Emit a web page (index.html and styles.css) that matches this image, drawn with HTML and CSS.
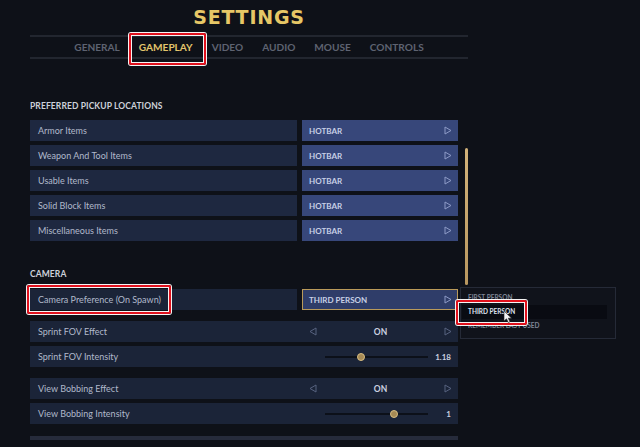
FILE: index.html
```html
<!DOCTYPE html>
<html lang="en">
<head>
  <meta charset="UTF-8">
  <title>Settings</title>
  <link rel="stylesheet" href="styles.css">
</head>
<body>
  <div class="page">
    <header class="head">
      <h1 class="title">SETTINGS</h1>
      <nav class="tabs">
        <span class="tab">GENERAL</span>
        <span class="tab active marked">GAMEPLAY</span>
        <span class="tab">VIDEO</span>
        <span class="tab">AUDIO</span>
        <span class="tab">MOUSE</span>
        <span class="tab">CONTROLS</span>
      </nav>
    </header>

    <div class="content">
      <div class="list">
        <h2 class="section-title">PREFERRED PICKUP LOCATIONS</h2>

        <div class="row">
          <div class="label">Armor Items</div>
          <div class="choice">HOTBAR <svg class="arrow" viewBox="0 0 8 9"><path d="M1 1 L7 4.5 L1 8 Z"/></svg></div>
        </div>
        <div class="row">
          <div class="label">Weapon And Tool Items</div>
          <div class="choice">HOTBAR <svg class="arrow" viewBox="0 0 8 9"><path d="M1 1 L7 4.5 L1 8 Z"/></svg></div>
        </div>
        <div class="row">
          <div class="label">Usable Items</div>
          <div class="choice">HOTBAR <svg class="arrow" viewBox="0 0 8 9"><path d="M1 1 L7 4.5 L1 8 Z"/></svg></div>
        </div>
        <div class="row">
          <div class="label">Solid Block Items</div>
          <div class="choice">HOTBAR <svg class="arrow" viewBox="0 0 8 9"><path d="M1 1 L7 4.5 L1 8 Z"/></svg></div>
        </div>
        <div class="row">
          <div class="label">Miscellaneous Items</div>
          <div class="choice">HOTBAR <svg class="arrow" viewBox="0 0 8 9"><path d="M1 1 L7 4.5 L1 8 Z"/></svg></div>
        </div>

        <h2 class="section-title camera-title">CAMERA</h2>

        <div class="row pref">
          <div class="label dark marked">Camera Preference (On Spawn)</div>
          <div class="choice selected">THIRD PERSON <svg class="arrow" viewBox="0 0 8 9"><path d="M1 1 L7 4.5 L1 8 Z"/></svg></div>

          <div class="dropdown">
            <div class="option">FIRST PERSON</div>
            <div class="option current marked">THIRD PERSON</div>
            <div class="option">REMEMBER LAST USED</div>
            <svg class="cursor" viewBox="0 0 10 14"><path d="M1 1 L1 11 L3.5 8.8 L5.3 12.6 L7 11.8 L5.3 8.2 L8.6 8.2 Z"/></svg>
          </div>
        </div>

        <div class="row wide gap-top">
          <div class="label">Sprint FOV Effect</div>
          <div class="toggle">
            <svg class="arrow dim" viewBox="0 0 8 9"><path d="M7 1 L1 4.5 L7 8 Z"/></svg>
            <span>ON</span>
            <svg class="arrow dim" viewBox="0 0 8 9"><path d="M1 1 L7 4.5 L1 8 Z"/></svg>
          </div>
        </div>
        <div class="row wide">
          <div class="label">Sprint FOV Intensity</div>
          <div class="slider">
            <div class="track"><span class="knob" style="left: 35%"></span></div>
            <span class="value">1.18</span>
          </div>
        </div>

        <div class="row wide gap-top">
          <div class="label">View Bobbing Effect</div>
          <div class="toggle">
            <svg class="arrow dim" viewBox="0 0 8 9"><path d="M7 1 L1 4.5 L7 8 Z"/></svg>
            <span>ON</span>
            <svg class="arrow dim" viewBox="0 0 8 9"><path d="M1 1 L7 4.5 L1 8 Z"/></svg>
          </div>
        </div>
        <div class="row wide">
          <div class="label">View Bobbing Intensity</div>
          <div class="slider">
            <div class="track"><span class="knob" style="left: 67%"></span></div>
            <span class="value">1</span>
          </div>
        </div>

        <div class="row-edge"></div>
      </div>

      <div class="scroll">
        <div class="thumb"></div>
      </div>
    </div>
  </div>
</body>
</html>
```

FILE: styles.css
```css
/* General */
body {
  margin: 0;
  background-color: #0e1118;
  font-family: Lato, "Noto Sans", sans-serif;
  color: #b4bccd;
  height: 447px;
  overflow: hidden;
}

.page {
  width: 438px;
  margin-left: 30px;
}

/* Header + tabs */
.title {
  margin: 0;
  padding-top: 6px;
  font-family: "DejaVu Sans", sans-serif;
  font-size: 19px;
  line-height: 22px;
  font-weight: bold;
  letter-spacing: 0.8px;
  text-align: center;
  color: #e6c766;
}

.tabs {
  margin-top: 7px;
  display: flex;
  justify-content: center;
  gap: 19px;
  border-top: 2px solid #22262f;
  border-bottom: 2px solid #22262f;
  height: 20px;
  align-items: center;
}

.tab {
  font-size: 10.1px;
  font-weight: bold;
  line-height: 20px;
  color: #5e6371;
}

.tab.active {
  color: #e3c56c;
}

/* red callout boxes */
.marked {
  position: relative;
}

.marked::after {
  content: "";
  position: absolute;
  border: 2px solid #e0101c;
  border-radius: 2px;
  box-shadow: 0 0 0 1px #f4f4f4, inset 0 0 0 1px #f4f4f4;
  pointer-events: none;
}

.tab.marked::after {
  left: -10px;
  right: -13px;
  top: -4px;
  bottom: -8px;
}

.label.marked::after {
  left: -3px;
  top: -4px;
  width: 140px;
  height: 25px;
}

.option.marked::after {
  left: -6px;
  top: -5px;
  width: 67px;
  height: 21px;
}

/* Content */
.content {
  display: flex;
  gap: 7px;
}

.list {
  width: 428px;
}

.section-title {
  margin: 42px 0 9px;
  font-size: 8.5px;
  line-height: 10px;
  font-weight: bold;
  color: #cdd1da;
  letter-spacing: 0.1px;
}

.camera-title {
  margin-top: 28px;
  margin-bottom: 10px;
}

.row {
  display: flex;
  gap: 5px;
  height: 21px;
  margin-bottom: 4px;
}

.row .label {
  width: 259px;
  padding-left: 8px;
  background-color: #1e2840;
  font-size: 9px;
  line-height: 21px;
  color: #b1b9cb;
}

.row .label.dark {
  background-color: #1b2438;
}

.choice {
  flex: 1;
  display: flex;
  align-items: center;
  justify-content: space-between;
  padding: 0 6px 0 7px;
  background-color: #37477a;
  font-size: 8px;
  font-weight: bold;
  color: #c8d0e6;
}

.choice.selected {
  background-color: #2f3d69;
  border: 1px solid #b99a5a;
  padding: 0 5px 0 6px;
}

.arrow {
  width: 8px;
  height: 9px;
  fill: none;
  stroke: #8d9ac6;
  stroke-width: 1;
}

.arrow.dim {
  stroke: #57627f;
}

/* Wide rows: sliders / toggles */
.row.wide {
  gap: 0;
  background-color: #1b2438;
}

.row.wide .label {
  width: 264px;
  background: none;
}

.gap-top {
  margin-top: 11px;
}

.toggle {
  flex: 1;
  display: flex;
  align-items: center;
  justify-content: space-between;
  padding: 0 6px 0 7px;
  font-size: 8.5px;
  font-weight: bold;
  color: #cbd1e0;
}

.slider {
  flex: 1;
  display: flex;
  align-items: center;
  padding: 0 7px 0 23px;
}

.track {
  position: relative;
  flex: 1;
  height: 2px;
  background-color: #0c1019;
}

.knob {
  position: absolute;
  top: -3px;
  width: 6px;
  height: 6px;
  margin-left: -4px;
  border-radius: 50%;
  background-color: #a68a55;
  border: 1px solid #d7bd82;
}

.value {
  width: 23px;
  text-align: right;
  font-size: 8px;
  font-weight: bold;
  color: #cbd1e0;
}

.row-edge {
  margin-top: 12px;
  height: 4px;
  background-color: #262b3b;
}

/* Dropdown */
.pref {
  position: relative;
}

.dropdown {
  position: absolute;
  left: 430px;
  top: -2px;
  width: 154px;
  height: 47px;
  padding-top: 3px;
  border: 1px solid #252a37;
  background-color: #10131b;
  z-index: 2;
}

.option {
  height: 14px;
  line-height: 14px;
  margin: 0 8px 0 1px;
  padding-left: 6px;
  font-size: 6.5px;
  font-weight: bold;
  color: #7e8596;
}

.option.current {
  background-color: #090b12;
  color: #dde2ee;
}

.cursor {
  position: absolute;
  left: 42px;
  top: 22px;
  width: 10px;
  height: 14px;
  fill: #f4f4f4;
  stroke: #222;
  stroke-width: 0.6;
}

/* Scrollbar */
.scroll {
  width: 3px;
}

.thumb {
  margin-top: 89px;
  height: 137px;
  border-radius: 2px;
  background: linear-gradient(#d2b27a, #b8975f);
}
```
